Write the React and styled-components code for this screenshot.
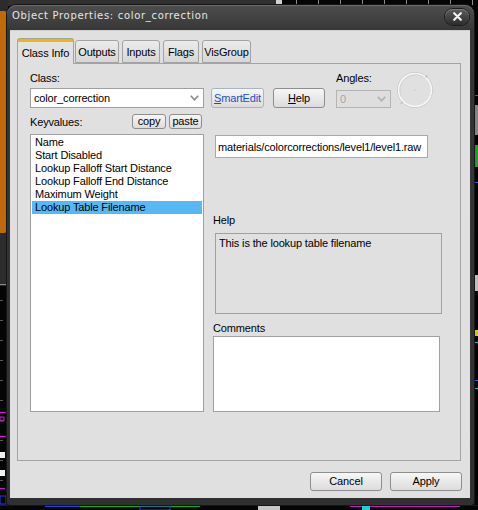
import React from "react";
import styled, { createGlobalStyle } from "styled-components";

const GlobalStyle = createGlobalStyle`
  html, body { margin: 0; padding: 0; background: #060606; }
  body {
    font-family: "Liberation Sans", Arial, sans-serif;
    font-size: 11px;
    letter-spacing: -0.15px;
    color: #000;
  }
  * { box-sizing: border-box; }
`;

const Desktop = styled.div`
  position: relative;
  width: 478px;
  height: 510px;
  overflow: hidden;
  padding: 5px 0 0 7px;
`;

/* editor viewport drawn behind the dialog */
const Viewport = styled.svg`
  position: absolute;
  left: 0;
  top: 0;
`;

const Window = styled.div`
  position: relative;
  width: 467px;
  height: 500px;
  display: flex;
  flex-direction: column;
  padding: 0 4px 7px 3px;
  border-radius: 9px 9px 3px 3px;
  background: linear-gradient(#4e4e4e, #363636 26px, #303030);
  box-shadow: 0 0 0 1px #161616, inset 0 1px 0 #6a6a6a;
`;

const TitleBar = styled.div`
  height: 25px;
  display: flex;
  align-items: center;
  justify-content: space-between;
  padding: 0 1px 4px 2px;
`;

const Title = styled.span`
  font-family: "DejaVu Sans", Verdana, sans-serif;
  font-size: 10px;
  letter-spacing: 0.68px;
  color: #e6e6e6;
  white-space: nowrap;
`;

const CloseButton = styled.div`
  width: 24px;
  height: 16px;
  margin-top: 2px;
  border-radius: 8px;
  display: flex;
  align-items: center;
  justify-content: center;
  background: linear-gradient(#5c5c5c, #2c2c2c);
  box-shadow: 0 0 0 1px #1c1c1c, inset 0 1px 0 #7a7a7a;
`;

const Client = styled.div`
  flex: 1;
  display: flex;
  flex-direction: column;
  background: #e0e0e0;
  padding: 8px 8px 0 7px;
  box-shadow: inset 0 1px 0 #cfcfcf;
`;

const TabStrip = styled.div`
  display: flex;
  align-items: flex-end;
  gap: 3px;
`;

const Tab = styled.div`
  position: relative;
  z-index: ${(p) => (p.$active ? 1 : 0)};
  width: ${(p) => p.$w}px;
  height: ${(p) => (p.$active ? 26 : 23)}px;
  margin-bottom: ${(p) => (p.$active ? -1 : 0)}px;
  margin-right: ${(p) => (p.$active ? -2 : 0)}px;
  display: flex;
  align-items: center;
  justify-content: center;
  padding-top: ${(p) => (p.$active ? 3 : 0)}px;
  border: 1px solid #a3a3a3;
  border-bottom: ${(p) => (p.$active ? "none" : "1px solid #a3a3a3")};
  border-radius: 3px 3px 0 0;
  background: ${(p) =>
    p.$active
      ? "linear-gradient(#f2b705 0, #f2b705 3px, #e2e2e2 3px, #e0e0e0)"
      : "linear-gradient(#ececec, #d6d6d6)"};
  white-space: nowrap;
`;

const Panel = styled.div`
  width: 444px;
  height: 398px;
  border: 1px solid #a3a3a3;
  background: #e0e0e0;
  padding: 7px 0 0 12px;
`;

const TopRow = styled.div`
  display: flex;
  align-items: flex-end;
`;

const Field = styled.div`
  display: flex;
  flex-direction: column;
  gap: ${(p) => p.$gap}px;
  margin-left: ${(p) => p.$ml || 0}px;
  width: ${(p) => p.$w}px;
`;

const Label = styled.div`
  line-height: 13px;
  height: 13px;
  margin-top: ${(p) => p.$mt || 0}px;
  white-space: nowrap;
`;

const Combo = styled.div`
  height: ${(p) => p.$h}px;
  display: flex;
  align-items: center;
  justify-content: space-between;
  padding: 0 4px 0 3px;
  border: 1px solid ${(p) => (p.$disabled ? "#b4b4b4" : "#a0a0a0")};
  background: ${(p) => (p.$disabled ? "#dedede" : "#fff")};
  color: ${(p) => (p.$disabled ? "#a6a6a6" : "#000")};
`;

const Button = styled.div`
  width: ${(p) => p.$w}px;
  height: ${(p) => p.$h}px;
  margin-left: ${(p) => p.$ml || 0}px;
  display: flex;
  align-items: center;
  justify-content: center;
  border: 1px solid ${(p) => (p.$link ? "#a9b4c4" : "#8e8e8e")};
  border-radius: 3px;
  background: linear-gradient(#f7f7f7, #e9e9e9 50%, #dcdcdc);
  color: ${(p) => (p.$link ? "#1452c8" : "#000")};
  white-space: nowrap;
  line-height: 13px;
`;

const Underline = styled.span`
  text-decoration: underline;
`;

const Dial = styled.svg`
  margin-left: 5px;
  margin-bottom: -1px;
  flex: none;
`;

const Body = styled.div`
  display: grid;
  grid-template-columns: 174px 229px;
  column-gap: 9px;
  margin-top: 6px;
`;

const Column = styled.div`
  display: flex;
  flex-direction: column;
`;

const KeyHeader = styled.div`
  height: 15px;
  display: flex;
  align-items: flex-end;
  padding-right: 2px;
`;

const HeaderButtons = styled.div`
  margin-left: auto;
  display: flex;
  gap: 3px;
  align-self: stretch;
`;

const ListBox = styled.div`
  margin-top: 5px;
  height: 278px;
  border: 1px solid #a0a0a0;
  background: #fff;
  padding: 1px;
`;

const ListItem = styled.div`
  height: 13px;
  line-height: 13px;
  padding-left: 3px;
  white-space: nowrap;
  background: ${(p) => (p.$selected ? "#56b8f5" : "transparent")};
`;

const TextInput = styled.div`
  margin: 21px 0 0 2px;
  width: 213px;
  height: 23px;
  display: flex;
  align-items: center;
  padding-left: 2px;
  border: 1px solid #a8a8a8;
  background: #fff;
  white-space: nowrap;
  overflow: hidden;
`;

const Box = styled.div`
  margin: ${(p) => p.$mt}px 0 0 ${(p) => p.$ml}px;
  width: 227px;
  height: ${(p) => p.$h}px;
  border: 1px solid #a0a0a0;
  background: ${(p) => (p.$white ? "#fff" : "#e0e0e0")};
  padding: 3px 0 0 3px;
  line-height: 13px;
`;

const Footer = styled.div`
  display: flex;
  justify-content: flex-end;
  gap: 8px;
  margin-top: 11px;
`;

const Chevron = ({ color = "#8a8a8a" }) => (
  <svg width="9" height="6" viewBox="0 0 9 6">
    <polyline points="0.8,0.8 4.5,4.8 8.2,0.8" fill="none" stroke={color} strokeWidth="1.6" />
  </svg>
);

const keyvalues = [
  "Name",
  "Start Disabled",
  "Lookup Falloff Start Distance",
  "Lookup Falloff End Distance",
  "Maximum Weight",
  "Lookup Table Filename",
];

const tabs = [
  { label: "Class Info", w: 57, active: true },
  { label: "Outputs", w: 44 },
  { label: "Inputs", w: 38 },
  { label: "Flags", w: 36 },
  { label: "VisGroup", w: 49 },
];

function EditorBackdrop() {
  return (
    <Viewport width="478" height="510" viewBox="0 0 478 510">
      <rect width="478" height="510" fill="#050505" />
      <rect x="0" y="0" width="282" height="6" fill="#303030" />
      <rect x="0" y="0" width="8" height="286" fill="#2c2c2c" />
      <rect x="-4" y="11" width="11" height="222" rx="3" fill="#c0680c" />
      <rect x="0" y="284" width="8" height="1" fill="#8a8a8a" />
      <rect x="276" y="0" width="6" height="6" fill="#d0d0d0" />
      {[296, 318, 340, 362, 384, 406, 428, 450, 472].map((x) => (
        <rect key={x} x={x} y="0" width="1" height="5" fill="#8c8c8c" />
      ))}
      {[300, 320, 340, 360, 380, 400, 420, 440, 460, 480].map((y) => (
        <rect key={y} x="0" y={y} width="3" height="1" fill="#5a5a5a" />
      ))}
      <rect x="0" y="412" width="6" height="1" fill="#d020d0" />
      <rect x="0" y="417" width="4" height="4" fill="none" stroke="#d020d0" />
      <rect x="0" y="436" width="7" height="1" fill="#d020d0" />
      <rect x="0" y="452" width="5" height="6" fill="#f0f0f0" />
      <rect x="0" y="470" width="5" height="6" fill="#f0f0f0" />
      <rect x="0" y="488" width="5" height="1" fill="#c020c0" />
      <rect x="0" y="496" width="6" height="8" fill="none" stroke="#2040ff" />
      <rect x="0" y="505" width="478" height="1" fill="#1c1c1c" />
      <rect x="45" y="506" width="60" height="1" fill="#2040ff" />
      <rect x="80" y="506" width="120" height="1" fill="#10b010" />
      <rect x="140" y="506" width="30" height="4" fill="none" stroke="#2040ff" />
      <rect x="258" y="505" width="22" height="5" fill="#c8c8c8" />
      <rect x="350" y="506" width="110" height="1" fill="#c020c0" />
      <rect x="362" y="506" width="8" height="4" fill="#20d0d0" />
      <rect x="474" y="95" width="4" height="1" fill="#2060ff" />
      <rect x="475" y="105" width="3" height="30" fill="#d8d8d8" opacity="0.6" />
      <rect x="475" y="145" width="3" height="22" fill="#20a020" />
      <rect x="474" y="182" width="4" height="1" fill="#2060ff" />
      <rect x="475" y="275" width="3" height="16" fill="#bcbcbc" />
      <rect x="475" y="330" width="3" height="6" fill="#c8c820" />
      <rect x="474" y="342" width="4" height="1" fill="#20c0c0" />
      <rect x="474" y="380" width="4" height="1" fill="#2060ff" />
      <rect x="474" y="388" width="4" height="1" fill="#20c0c0" />
    </Viewport>
  );
}

export default function App() {
  return (
    <>
      <GlobalStyle />
      <Desktop>
        <EditorBackdrop />
        <Window>
          <TitleBar>
            <Title>Object Properties: color_correction</Title>
            <CloseButton>
              <svg width="9" height="9" viewBox="0 0 9 9">
                <path d="M1.2 1.2 L7.8 7.8 M7.8 1.2 L1.2 7.8" stroke="#f4f4f4" strokeWidth="2.1" strokeLinecap="round" />
              </svg>
            </CloseButton>
          </TitleBar>
          <Client>
            <TabStrip>
              {tabs.map((t) => (
                <Tab key={t.label} $w={t.w} $active={t.active}>
                  {t.label}
                </Tab>
              ))}
            </TabStrip>
            <Panel>
              <TopRow>
                <Field $w={174} $gap={3}>
                  <Label>Class:</Label>
                  <Combo $h={20}>
                    <span>color_correction</span>
                    <Chevron />
                  </Combo>
                </Field>
                <Button $w={53} $h={20} $ml={7} $link>
                  <span>
                    <Underline>S</Underline>martEdit
                  </span>
                </Button>
                <Button $w={52} $h={20} $ml={9}>
                  <span>
                    <Underline>H</Underline>elp
                  </span>
                </Button>
                <Field $w={55} $gap={5} $ml={11}>
                  <Label>Angles:</Label>
                  <Combo $h={18} $disabled>
                    <span>0</span>
                    <Chevron color="#b0b0b0" />
                  </Combo>
                </Field>
                <Dial width="38" height="38" viewBox="0 0 38 38">
                  <circle cx="19" cy="19" r="17.5" fill="none" stroke="#c4c4c4" strokeWidth="1" />
                  <circle cx="19" cy="19" r="16.5" fill="none" stroke="#f6f6f6" strokeWidth="1.6" />
                  <path d="M5.2 25.5 A15.5 15.5 0 0 1 27 5.8" fill="none" stroke="#d2d2d2" strokeWidth="1" />
                  <line x1="29.5" y1="6.5" x2="31.5" y2="4.5" stroke="#b8b8b8" strokeWidth="1.2" />
                  <line x1="6.5" y1="31" x2="4.8" y2="32.6" stroke="#b8b8b8" strokeWidth="1.2" />
                  <rect x="18.5" y="18.5" width="1" height="1" fill="#bdbdbd" />
                </Dial>
              </TopRow>
              <Body>
                <Column>
                  <KeyHeader>
                    <Label>Keyvalues:</Label>
                    <HeaderButtons>
                      <Button $w={34} $h={15}>copy</Button>
                      <Button $w={33} $h={15}>paste</Button>
                    </HeaderButtons>
                  </KeyHeader>
                  <ListBox>
                    {keyvalues.map((k, i) => (
                      <ListItem key={k} $selected={i === keyvalues.length - 1}>
                        {k}
                      </ListItem>
                    ))}
                  </ListBox>
                </Column>
                <Column>
                  <TextInput>materials/colorcorrections/level1/level1.raw</TextInput>
                  <Label $mt={56}>Help</Label>
                  <Box $mt={6} $ml={2} $h={81}>
                    This is the lookup table filename
                  </Box>
                  <Label $mt={8}>Comments</Label>
                  <Box $mt={1} $ml={0} $h={76} $white />
                </Column>
              </Body>
            </Panel>
            <Footer>
              <Button $w={72} $h={19}>Cancel</Button>
              <Button $w={72} $h={19}>Apply</Button>
            </Footer>
          </Client>
        </Window>
      </Desktop>
    </>
  );
}
